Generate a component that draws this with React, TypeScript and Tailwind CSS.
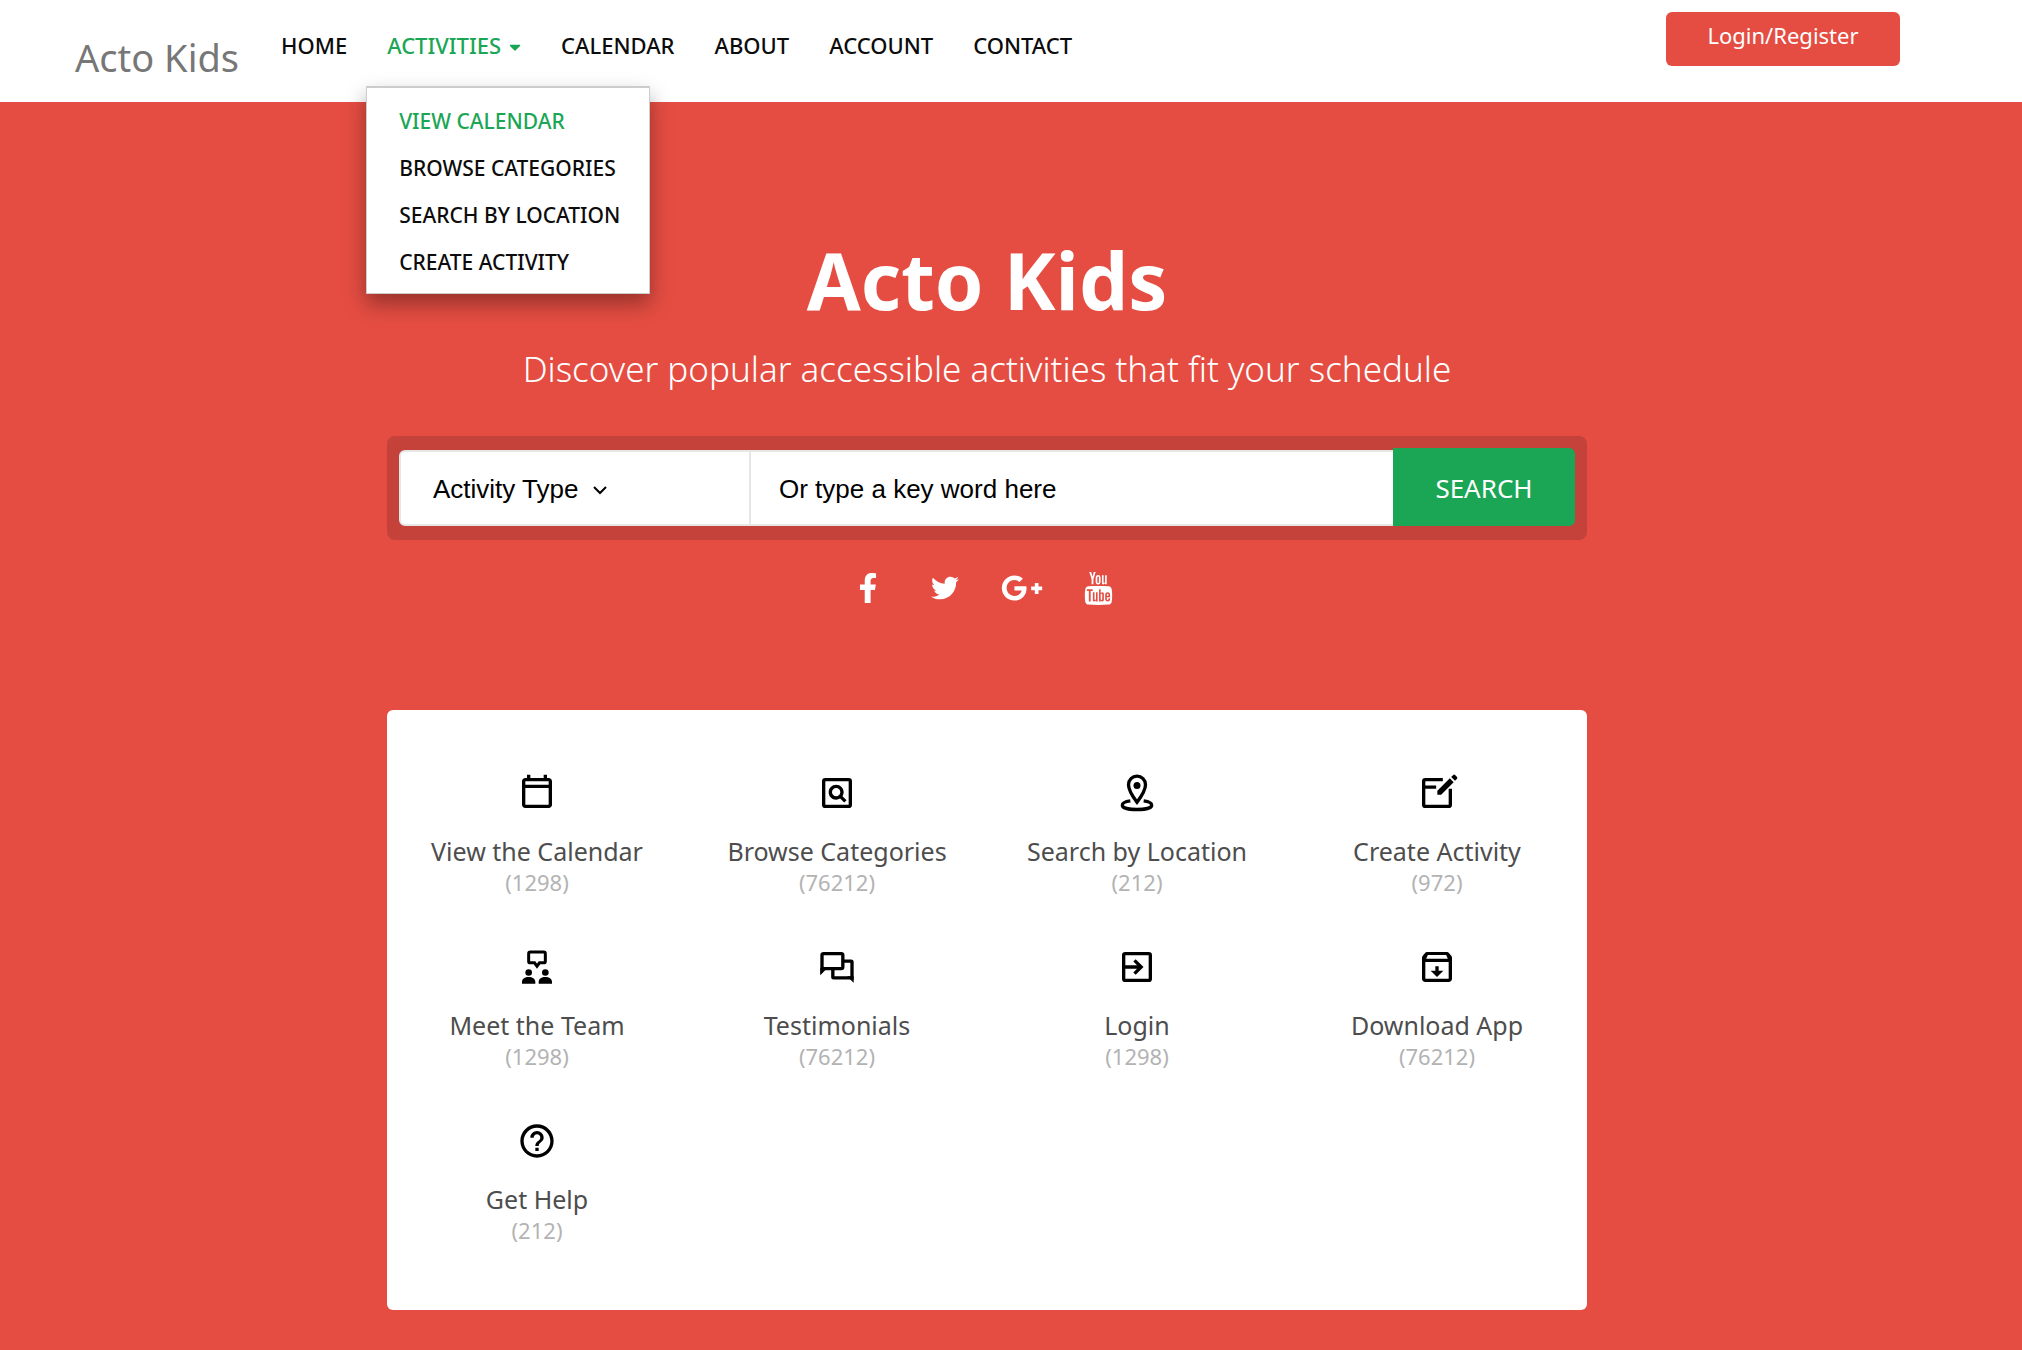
import type { ReactNode } from "react";
import { FaCaretDown, FaFacebookF, FaGooglePlusG, FaTwitter } from "react-icons/fa";
import { TfiYoutube } from "react-icons/tfi";

const navLinks = ["CALENDAR", "ABOUT", "ACCOUNT", "CONTACT"];

const menuItems = ["VIEW CALENDAR", "BROWSE CATEGORIES", "SEARCH BY LOCATION", "CREATE ACTIVITY"];

function Icon({ children }: { children: ReactNode }) {
  return (
    <svg viewBox="0 0 24 24" className="size-10 overflow-visible fill-black" aria-hidden="true">
      {children}
    </svg>
  );
}

const line = { fill: "none", stroke: "black", strokeWidth: 2 };

const calendarIcon = (
  <path d="M19 3h-1V1h-2v2H8V1H6v2H5c-1.11 0-2 .89-2 2v14c0 1.11.89 2 2 2h14c1.11 0 2-.89 2-2V5c0-1.11-.89-2-2-2m0 16H5V9h14v10m0-12H5V5h14z" />
);

const browseIcon = (
  <>
    <rect x="4" y="4" width="16" height="16" rx="1" {...line} />
    <path d="M11.49 16c.88 0 1.7-.26 2.39-.7l2.44 2.44 1.42-1.42-2.44-2.43c.44-.7.7-1.51.7-2.39C16 9.01 13.99 7 11.5 7S7 9.01 7 11.5 9.01 16 11.49 16zm.01-7a2.5 2.5 0 010 5 2.5 2.5 0 010-5z" />
  </>
);

const locationIcon = (
  <>
    <path d="M12 17.500C9 13.500 6.900 10.300 6.900 7a5.100 5.100 0 0 1 10.200 0c0 3.300-2.100 6.500-5.100 10.500z" {...line} />
    <circle cx="12" cy="7.500" r="2.100" />
    <path d="M8 16.700C5 17.100 3.200 18.100 3.200 19.300c0 1.600 4 2.600 8.800 2.600s8.800-1 8.800-2.600c0-1.200-1.800-2.200-4.800-2.600" {...line} />
  </>
);

const createIcon = (
  <>
    <path d="M15.500 4H5a1 1 0 0 0-1 1v14a1 1 0 0 0 1 1h14a1 1 0 0 0 1-1V9.500M4 8.500h7.500" {...line} />
    <path d="M12.200 10.700 19.700 3.200l2.300 2.300-7.500 7.500h-2.300zM20.500 2.400l1.100-1.100q.7-.7 1.400 0l.9.900q.7.7 0 1.400l-1.100 1.100z" />
  </>
);

const teamIcon = (
  <>
    <path d="M8 3h8a1 1 0 0 1 1 1v4.500a1 1 0 0 1-1 1h-2.500L12 11.500l-1.500-2H8a1 1 0 0 1-1-1V4a1 1 0 0 1 1-1z" fill="none" stroke="black" strokeWidth="1.800" />
    <circle cx="7" cy="15.300" r="2" />
    <circle cx="17" cy="15.300" r="2" />
    <path d="M3 22v-1C3 19 4.800 18 7 18s4 1 4 3v1zM13 22v-1c0-2 1.800-3 4-3s4 1 4 3v1z" />
  </>
);

const testimonialsIcon = (
  <>
    <path d="M3 14.500V5a1 1 0 0 1 1-1h10.500a1 1 0 0 1 1 1v7a1 1 0 0 1-1 1H4.500z" fill="none" stroke="black" strokeWidth="2" />
    <path d="M2 12.500h3l-3 4z" />
    <path d="M16 8.500h4.500a.5.5 0 0 1 .5.500v9.500H10a.5.5 0 0 1-.5-.5v-4.500" {...line} />
    <path d="M22 17.500h-4l4 4z" />
  </>
);

const loginIcon = (
  <>
    <rect x="4" y="4" width="16" height="16" rx="1" {...line} />
    <path d="M4 12h10M10.500 8l4 4-4 4" {...line} />
  </>
);

const downloadIcon = (
  <path
    fillRule="evenodd"
    d="M20.540 5.230l-1.390-1.680C18.880 3.210 18.470 3 18 3H6c-.47 0-.88.21-1.160.55L3.460 5.230C3.170 5.570 3 6.020 3 6.500V19c0 1.100.9 2 2 2h14c1.100 0 2-.9 2-2V6.500c0-.48-.17-.93-.46-1.270zM6.500 4.800h11l1 2.200h-13zM5 19V9h14v10zM11 11.500h2v2.700h2.800L12 18l-3.800-3.800H11z"
  />
);

const helpIcon = (
  <path d="M11 18h2v-2h-2v2zm1-16C6.480 2 2 6.480 2 12s4.480 10 10 10 10-4.480 10-10S17.520 2 12 2zm0 18c-4.410 0-8-3.590-8-8s3.590-8 8-8 8 3.590 8 8-3.590 8-8 8zm0-14c-2.210 0-4 1.790-4 4h2c0-1.100.9-2 2-2s2 .9 2 2c0 2-3 1.750-3 5h2c0-2.250 3-2.500 3-5 0-2.210-1.790-4-4-4z" />
);

const tiles = [
  { label: "View the Calendar", count: "1298", icon: calendarIcon },
  { label: "Browse Categories", count: "76212", icon: browseIcon },
  { label: "Search by Location", count: "212", icon: locationIcon },
  { label: "Create Activity", count: "972", icon: createIcon },
  { label: "Meet the Team", count: "1298", icon: teamIcon },
  { label: "Testimonials", count: "76212", icon: testimonialsIcon },
  { label: "Login", count: "1298", icon: loginIcon },
  { label: "Download App", count: "76212", icon: downloadIcon },
  { label: "Get Help", count: "212", icon: helpIcon },
];

const socials = [
  { name: "Facebook", icon: <FaFacebookF className="h-[30px] w-auto" /> },
  { name: "Twitter", icon: <FaTwitter className="size-7" /> },
  { name: "Google Plus", icon: <FaGooglePlusG className="size-[42px]" /> },
  { name: "YouTube", icon: <TfiYoutube className="size-[33px]" /> },
];

function Header() {
  return (
    <header className="flex h-[102px] items-start bg-white pr-[122px] pl-[75px]">
      <a href="#" className="mt-[33px] text-[38px] leading-12 whitespace-nowrap text-[#777777]">
        Acto Kids
      </a>
      <nav className="mt-[29px] ml-[42px] flex gap-10 text-[22px] leading-8 font-medium whitespace-nowrap text-[#0c0c0c]">
        <a href="#">HOME</a>
        <div className="relative">
          <button type="button" aria-expanded="true" className="flex items-center gap-2 text-[#1ba656]">
            ACTIVITIES
            <FaCaretDown className="mt-1 h-[18px] w-3" />
          </button>
          <ul className="absolute top-[57px] -left-[21px] z-10 w-[284px] border border-t-2 border-[#cccccc] bg-white px-8 pt-[10px] pb-[7px] text-[21px] leading-[47px] shadow-[0_10px_20px_rgba(0,0,0,0.35)]">
            {menuItems.map((item, i) => (
              <li key={item}>
                <a href="#" className={i === 0 ? "text-[#1ba656]" : ""}>
                  {item}
                </a>
              </li>
            ))}
          </ul>
        </div>
        {navLinks.map((link) => (
          <a href="#" key={link}>
            {link}
          </a>
        ))}
      </nav>
      <button type="button" className="mt-3 ml-auto h-[54px] w-[234px] rounded-md bg-[#e54d42] pb-2 text-[22px] text-white">
        Login/Register
      </button>
    </header>
  );
}

function SearchForm() {
  return (
    <form className="mt-[43px] flex w-full items-end rounded-lg bg-[#c5423a] px-3 pt-3 pb-[14px] font-['Liberation_Sans',sans-serif] text-[26px] text-black">
      <div className="relative h-[76px] w-[352px] rounded-l-md border-2 border-[#e6e6e6] bg-white">
        <select aria-label="Activity Type" className="h-full w-full appearance-none bg-transparent pt-0.5 pl-8 outline-none">
          <option>Activity Type</option>
        </select>
        <svg viewBox="0 0 14 9" className="pointer-events-none absolute top-[34px] left-48 h-[9px] w-[14px]" aria-hidden="true">
          <path d="M1 1l6 6 6-6" fill="none" stroke="black" strokeWidth="2" />
        </svg>
      </div>
      <input
        type="text"
        aria-label="Key word"
        placeholder="Or type a key word here"
        className="h-[76px] min-w-0 flex-1 border-y-2 border-[#e6e6e6] bg-white px-7 pt-0.5 outline-none placeholder:text-black"
      />
      <button type="submit" className="h-[78px] w-[182px] rounded-r-md bg-[#1ba656] pt-0.5 font-['Noto_Sans',sans-serif] text-[26px] text-white">
        SEARCH
      </button>
    </form>
  );
}

export default function App() {
  return (
    <div className="min-h-screen bg-[#e54d42] font-['Noto_Sans',sans-serif]">
      <Header />
      <main className="pr-12 pb-10">
        <div className="mx-auto flex max-w-[1200px] flex-col items-center">
          <h1 className="mt-[130px] text-[78px] leading-[96px] font-bold text-white">Acto Kids</h1>
          <p className="mt-[17px] text-[35px] leading-12 font-light text-white">
            Discover popular accessible activities that fit your schedule
          </p>
          <SearchForm />
          <ul className="mt-[28px] flex h-10 pr-2 text-white">
            {socials.map((s) => (
              <li key={s.name} className="w-[77px]">
                <a href="#" aria-label={s.name} className="flex h-full items-center justify-center">
                  {s.icon}
                </a>
              </li>
            ))}
          </ul>
          <section className="mt-[102px] grid w-full grid-cols-4 gap-y-[50px] rounded-md bg-white pt-[63px] pb-[65px]">
            {tiles.map((t) => (
              <a href="#" key={t.label} className="flex flex-col items-center">
                <Icon>{t.icon}</Icon>
                <span className="mt-[18px] text-[25px] leading-10 text-[#4d4d4d]">{t.label}</span>
                <span className="-mt-1 text-[22px] leading-[30px] text-[#b3b3b3]">({t.count})</span>
              </a>
            ))}
          </section>
        </div>
      </main>
    </div>
  );
}
